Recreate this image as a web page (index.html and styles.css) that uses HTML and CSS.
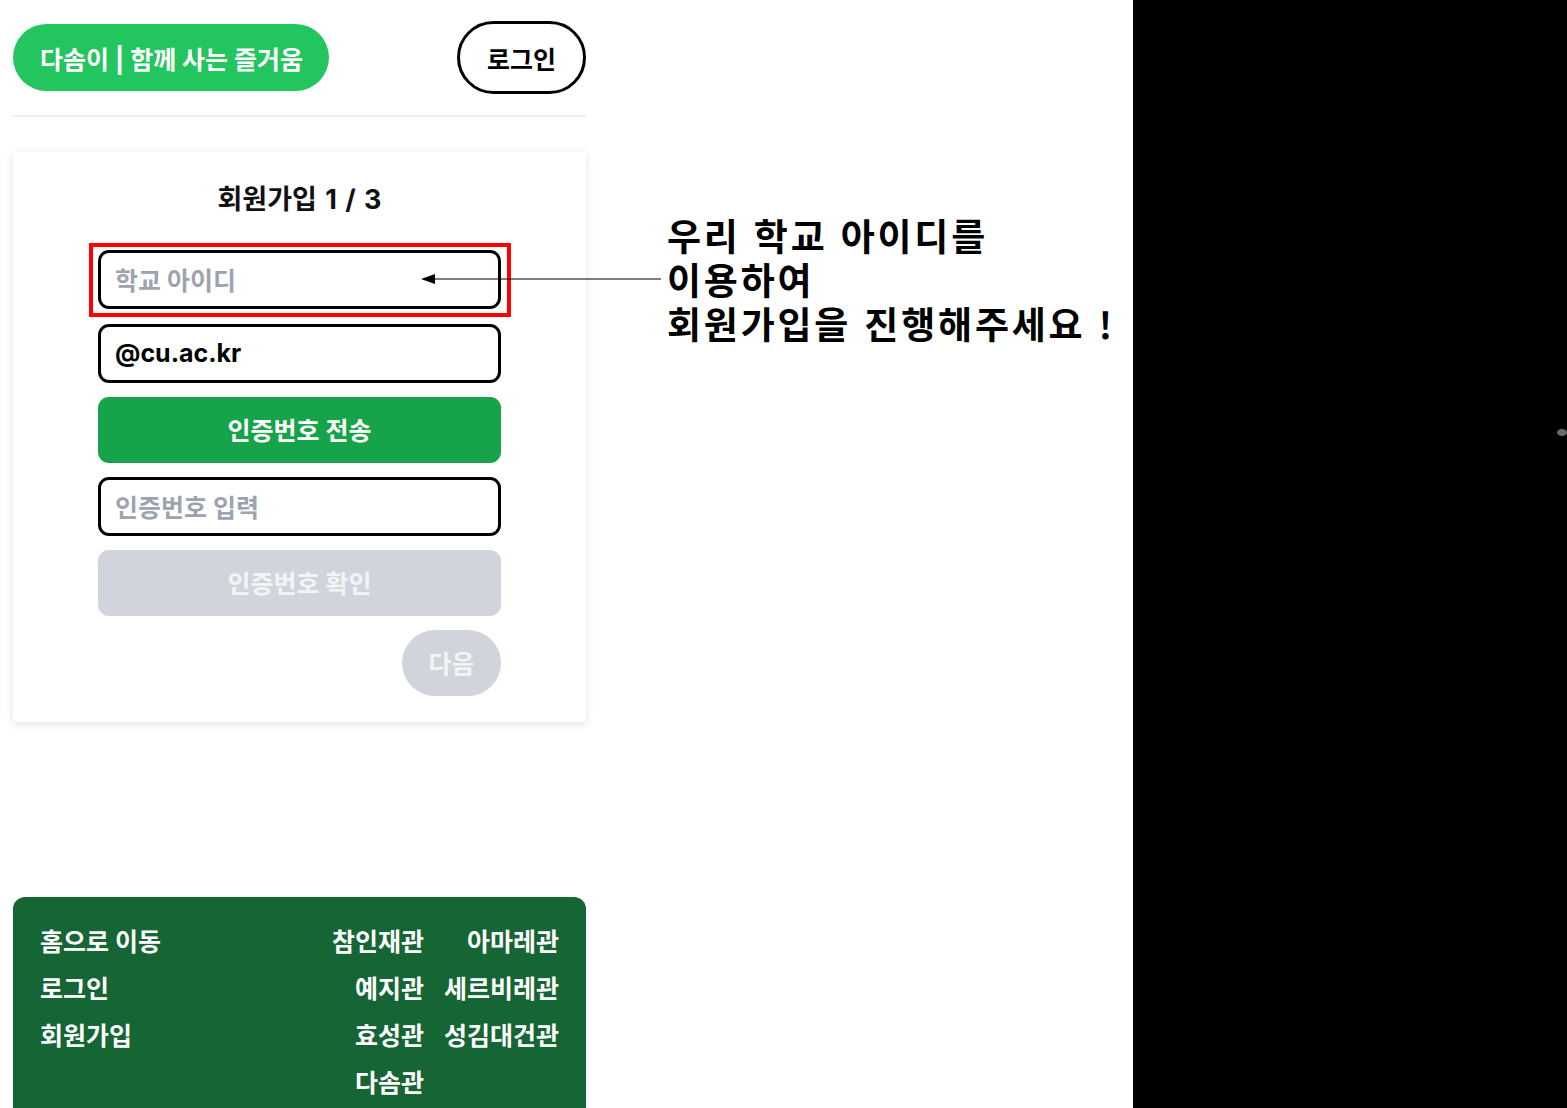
FILE: index.html
```html
<!DOCTYPE html>
<html lang="ko">
<head>
<meta charset="utf-8">
<title>다솜이 | 회원가입</title>
<link rel="stylesheet" href="styles.css">
</head>
<body>
<div class="canvas">
  <div class="app">
    <header class="header">
      <a class="brand">다솜이 | 함께 사는 즐거움</a>
      <a class="login-btn">로그인</a>
    </header>
    <div class="divider"></div>
    <main class="card">
      <h2 class="title">회원가입 1 / 3</h2>
      <form class="form">
        <div class="field"><span class="ph">학교 아이디</span></div>
        <div class="field"><span class="val">@cu.ac.kr</span></div>
        <div class="btn btn-green">인증번호 전송</div>
        <div class="field"><span class="ph">인증번호 입력</span></div>
        <div class="btn btn-gray">인증번호 확인</div>
        <div class="next-row"><div class="btn-next">다음</div></div>
      </form>
    </main>
    <footer class="footer">
      <div class="foot-grid">
        <span class="l">홈으로 이동</span><span class="r">참인재관</span><span class="r">아마레관</span>
        <span class="l">로그인</span><span class="r">예지관</span><span class="r">세르비레관</span>
        <span class="l">회원가입</span><span class="r">효성관</span><span class="r">성김대건관</span>
        <span class="l"></span><span class="r">다솜관</span><span class="r"></span>
      </div>
    </footer>
  </div>
  <div class="annot-area"></div>
  <div class="black-panel"><span class="dot"></span></div>

  <div class="red-box"></div>
  <svg class="arrow" width="240" height="14" viewBox="0 0 240 14">
    <line x1="12" y1="7" x2="240" y2="7" stroke="#000" stroke-width="1.2"/>
    <polygon points="0,7 14,2 14,12" fill="#000"/>
  </svg>
  <div class="annot-text">
    <div class="annot-line">우리 학교 아이디를</div>
    <div class="annot-line">이용하여</div>
    <div class="annot-line">회원가입을 진행해주세요 !</div>
  </div>
</div>
</body>
</html>
```

FILE: styles.css
```css
* { box-sizing: border-box; }
html, body { margin: 0; padding: 0; background: #fff; }
body {
  font-family: "Inter", "Noto Sans CJK KR", "Noto Sans", sans-serif;
  width: 1567px;
  height: 1108px;
  overflow: hidden;
}
.canvas {
  position: relative;
  display: flex;
  width: 1567px;
  height: 1108px;
}
.app {
  width: 599px;
  padding: 0 13px;
  flex: none;
}
.header {
  display: flex;
  justify-content: space-between;
  align-items: center;
  padding-top: 21px;
}
.brand {
  display: flex;
  align-items: center;
  height: 67px;
  padding: 0 26px 0 27px;
  background: #22c55e;
  color: #fff;
  font-weight: 700;
  font-size: 25px;
  border-radius: 34px;
  white-space: nowrap;
}
.login-btn {
  display: flex;
  align-items: center;
  justify-content: center;
  width: 129px;
  height: 73px;
  border: 3px solid #000;
  border-radius: 37px;
  font-weight: 700;
  font-size: 25px;
  color: #000;
}
.divider {
  height: 2px;
  background: #eceef2;
  margin-top: 21px;
}
.card {
  margin-top: 35px;
  background: #fff;
  border-radius: 4px;
  box-shadow: 0 2px 8px rgba(0,0,0,0.12);
  padding: 30px 0 26px;
}
.title {
  margin: 0 0 32px;
  text-align: center;
  font-size: 27px;
  line-height: 36px;
  font-weight: 700;
  word-spacing: 2px;
  color: #111;
}
.form {
  width: 403px;
  margin: 0 auto;
  display: flex;
  flex-direction: column;
  gap: 14px;
}
.field {
  height: 59px;
  border: 3px solid #000;
  border-radius: 11px;
  display: flex;
  align-items: center;
  padding-left: 14px;
  padding-bottom: 2px;
  font-size: 25px;
  font-weight: 700;
}
.field:first-child { margin-bottom: 1px; }
.ph { color: #9ca3af; }
.val { color: #000; }
.btn {
  height: 66px;
  border-radius: 11px;
  display: flex;
  align-items: center;
  justify-content: center;
  padding-bottom: 2px;
  font-size: 25px;
  font-weight: 700;
}
.btn-green { background: #16a34a; color: #fff; }
.btn-gray { background: #d1d5db; color: #f3f4f6; }
.next-row { display: flex; justify-content: flex-end; }
.btn-next {
  width: 99px;
  height: 66px;
  border-radius: 33px;
  background: #d1d5db;
  color: #f3f4f6;
  font-size: 25px;
  font-weight: 700;
  padding-bottom: 2px;
  display: flex;
  align-items: center;
  justify-content: center;
}
.footer {
  margin-top: 175px;
  background: #166534;
  border-radius: 12px 12px 0 0;
  padding: 28px 27px 40px;
  height: 260px;
}
.foot-grid {
  display: grid;
  grid-template-columns: 1fr auto auto;
  column-gap: 20px;
  row-gap: 13px;
  color: #fff;
  font-size: 25px;
  font-weight: 700;
  line-height: 34px;
}
.foot-grid .r { text-align: right; }
.annot-area { flex: 1; }
.black-panel {
  position: relative;
  width: 434px;
  flex: none;
  background: #000;
}
.dot {
  position: absolute;
  left: 424px;
  top: 429px;
  width: 10px;
  height: 7px;
  border-radius: 50%;
  background: #6b6b6b;
}
.red-box {
  position: absolute;
  left: 89px;
  top: 243px;
  width: 422px;
  height: 74px;
  border: 4px solid #ff0000;
}
.arrow {
  position: absolute;
  left: 421px;
  top: 272px;
}
.annot-text {
  position: absolute;
  left: 667px;
  top: 213px;
  font-family: "Noto Sans CJK KR", sans-serif;
  font-size: 37px;
  font-weight: 700;
  letter-spacing: 2.8px;
  color: #000;
  white-space: nowrap;
}
.annot-line {
  height: 44px;
  line-height: 44px;
  overflow: visible;
}
```
